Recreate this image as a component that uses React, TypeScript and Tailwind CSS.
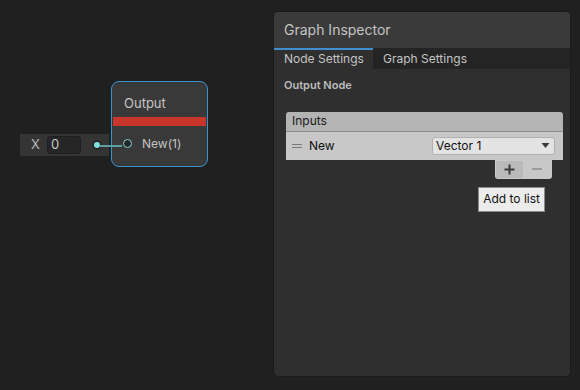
const font = { fontFamily: "Inter, 'Noto Sans', sans-serif" }

const OutputNode = () => {
  return (
    <div className="absolute left-[111px] top-[70px] w-[97px] h-[86px] rounded-[8px] border border-[#3b93c9] bg-[#383838] p-[1px]">
      <div className="h-full w-full rounded-[7px] bg-[#393939] flex flex-col overflow-hidden">
        <div className="h-[34px] flex items-end pl-[11px] pb-[4px] text-[13px] text-[#c6c6c6]">Output</div>
        <div className="h-[9px] bg-[#c8352a]" />
        <div className="flex-1 flex items-center pl-[10px] gap-[10px] text-[12px] text-[#c4c4c4] pb-[4px]">
          <span className="w-[9px] h-[9px] rounded-full border border-[#7fd3d8] bg-[#262626]" />
          New(1)
        </div>
      </div>
    </div>
  )
}

const XField = () => {
  return (
    <div className="absolute left-[20px] top-[123px] w-[89px] h-[22px] bg-[#343434] flex items-center pl-[11px] text-[13px] text-[#b8b8b8]">
      <span>X</span>
      <div className="ml-[7px] w-[34px] h-[18px] rounded-[3px] bg-[#262626] border border-[#1e1e1e] flex items-center pl-[3px] text-[#c8c8c8]">0</div>
      <span className="ml-[13px] w-[6px] h-[6px] rounded-full bg-[#7fe0e4] ring-2 ring-[#262626]" />
    </div>
  )
}

export default function App() {
  return (
    <div className="w-[580px] h-[390px] bg-[#202020] flex pt-[11px] pb-[13px] pr-[9px] overflow-hidden" style={font}>
      <div className="relative w-[273px] h-full">
        <XField />
        <OutputNode />
        <div className="absolute left-[99px] top-[134px] w-[23px] h-[2px] bg-[#5a9fa2]" />
      </div>

      <section className="flex-1 flex flex-col rounded-[5px] bg-[#2f2f2f] border border-[#1a1a1a] overflow-hidden">
        <div className="h-[36px] bg-[#3a3a3a] flex items-center pl-[10px] pb-[2px] text-[14px] text-[#c4c4c4]">Graph Inspector</div>
        <div className="flex h-[21px] bg-[#242424] text-[12px] text-[#c4c4c4]">
          <div className="w-[99px] bg-[#2f2f2f] border-t-2 border-[#3e8ed0] flex items-center pl-[10px] pb-[1px] leading-none">Node Settings</div>
          <div className="flex items-center pl-[10px] pt-[1px] leading-none">Graph Settings</div>
        </div>

        <div className="px-[10px] pt-[8px]">
          <div className="text-[11px] font-semibold text-[#bdbdbd]">Output Node</div>

          <div className="mt-[18px] ml-[2px] w-[277px]">
            <div className="h-[20px] bg-[#b4b4b4] rounded-t-[3px] border-b border-[#8c8c8c] flex items-center pl-[6px] text-[12px] text-[#1a1a1a]">Inputs</div>
            <div className="h-[28px] bg-[#c8c8c8] flex items-center justify-between pl-[6px] pr-[8px] text-[12px] text-[#101010]">
              <div className="flex items-center gap-[7px]">
                <span className="flex flex-col gap-[2px]">
                  <span className="w-[10px] h-[1px] bg-[#7a7a7a]" />
                  <span className="w-[10px] h-[1px] bg-[#7a7a7a]" />
                </span>
                New
              </div>
              <div className="w-[123px] h-[18px] rounded-[3px] bg-[#e3e3e3] border border-[#b0b0b0] flex items-center justify-between pl-[3px] pr-[4px] text-[12px]">
                Vector 1
                <svg width="9" height="5" viewBox="0 0 9 5"><path d="M0.5 0h8L4.5 5z" fill="#3a3a3a" /></svg>
              </div>
            </div>
            <div className="flex justify-end pr-[11px]">
              <div className="w-[57px] h-[19px] bg-[#c8c8c8] rounded-b-[3px] flex items-center p-[1px]">
                <div className="w-[27px] h-full bg-[#bababa] flex items-center justify-center">
                  <svg width="11" height="11" viewBox="0 0 11 11"><path d="M5.5 0.5v10M0.5 5.5h10" stroke="#3a3a3a" strokeWidth="2" /></svg>
                </div>
                <div className="flex-1 flex items-center justify-center">
                  <svg width="10" height="2" viewBox="0 0 10 2"><path d="M0 1h10" stroke="#8e8e8e" strokeWidth="1.5" /></svg>
                </div>
              </div>
            </div>
            <div className="flex justify-end pr-[18px] mt-[8px]">
              <div className="h-[25px] px-[4px] bg-[#ececec] border border-[#8a8a8a] flex items-center text-[12px] text-[#111]">Add to list</div>
            </div>
          </div>
        </div>
      </section>
    </div>
  )
}
